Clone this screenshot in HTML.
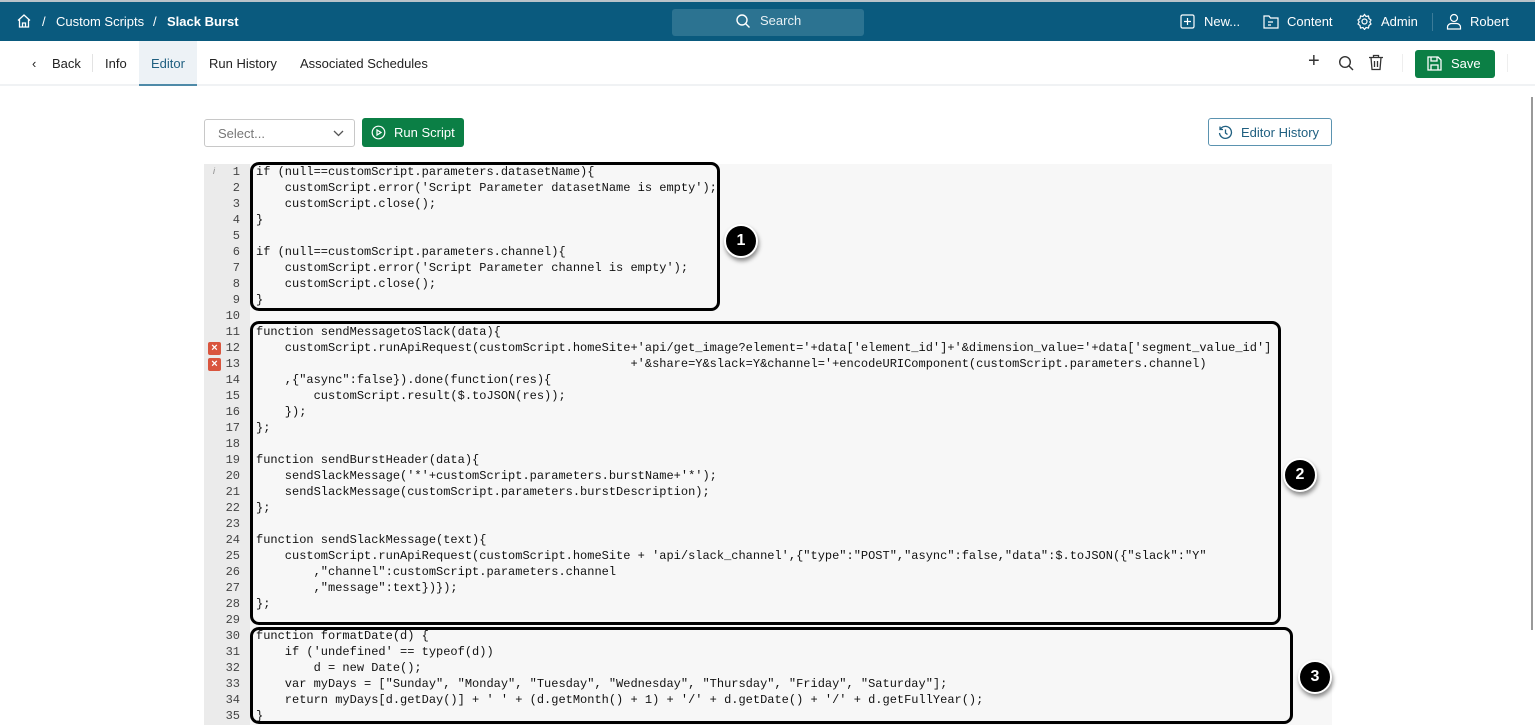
<!DOCTYPE html>
<html><head><meta charset="utf-8"><style>
*{box-sizing:border-box;margin:0;padding:0}
body{width:1535px;height:725px;overflow:hidden;background:#fff;font-family:"Liberation Sans",sans-serif;position:relative}
.top{position:absolute;left:0;top:0;width:1535px;height:41px;background:#0a5a7e;border-top:2px solid #b9c3c9;color:#fff;font-size:13px}
.top span{position:absolute;top:12px}
.search{position:absolute;left:672px;top:7px;width:192px;height:27px;background:#2c7391;border-radius:3px;color:#e8f0f4;font-size:13px}
.nav{position:absolute;left:0;top:41px;width:1535px;height:45px;border-bottom:2px solid #f0f2f4;font-size:13px;color:#222}
.nav span{position:absolute;top:15px}
.gut{position:absolute;left:204px;top:164px;width:46px;height:561px;background:#ebebeb}
.code{position:absolute;left:250px;top:164px;width:1082px;height:561px;background:#f7f7f7}
pre{position:absolute;left:256px;top:164px;font-family:"Liberation Mono",monospace;font-size:12px;line-height:16px;color:#111}
.ln{position:absolute;left:204px;top:164px;width:36px;text-align:right;font-family:"Liberation Mono",monospace;font-size:12px;line-height:16px;color:#444}
.box{position:absolute;border:3px solid #000;border-radius:9px}
.c{position:absolute;width:34px;height:34px;border-radius:50%;background:#000;border:2px solid #fff;box-shadow:1px 3px 4px rgba(0,0,0,.45);color:#fff;font-weight:bold;font-size:16px;text-align:center;line-height:30px}
.x{position:absolute;left:208px;width:13px;height:13px;background:#d9553e;border-radius:2px;color:#fff;font-size:11px;line-height:13px;text-align:center;font-weight:bold}
</style></head><body>
<div class="top">
<svg style="position:absolute;left:16px;top:11px" width="16" height="16" viewBox="0 0 16 16" fill="none" stroke="#fff" stroke-width="1.3"><path d="M2 7.5L8 2l6 5.5M3.5 6.5V14h9V6.5M6.5 14v-4h3v4"/></svg>
<span style="left:42px">/</span><span style="left:56px">Custom Scripts</span><span style="left:153px">/</span><span style="left:167px;font-weight:bold">Slack Burst</span>
<div class="search"><svg style="position:absolute;left:63px;top:4px" width="16" height="16" viewBox="0 0 16 16" fill="none" stroke="#fff" stroke-width="1.4"><circle cx="7" cy="7" r="5"/><path d="M10.5 10.5l4 4"/></svg><span style="position:absolute;left:88px;top:4px">Search</span></div>
<svg style="position:absolute;left:1180px;top:12px" width="15" height="15" viewBox="0 0 15 15" fill="none" stroke="#fff" stroke-width="1.2"><rect x="1" y="1" width="13" height="13" rx="1.5"/><path d="M7.5 4v7M4 7.5h7"/></svg><span style="left:1204px">New...</span>
<svg style="position:absolute;left:1263px;top:12px" width="16" height="15" viewBox="0 0 16 15" fill="none" stroke="#fff" stroke-width="1.2"><path d="M1 2h5l1.5 2H15v10H1z"/><path d="M5 8h5M5 11h3"/></svg><span style="left:1287px">Content</span>
<svg style="position:absolute;left:1356px;top:11px" width="17" height="17" viewBox="0 0 17 17" fill="none" stroke="#fff" stroke-width="1.2"><circle cx="8.5" cy="8.5" r="2.5"/><path d="M8.5 1.5l1.5 2 2.5-.5.5 2.5 2 1.5-1.2 2 1.2 2-2 1.5-.5 2.5-2.5-.5-1.5 2-1.5-2-2.5.5-.5-2.5-2-1.5 1.2-2-1.2-2 2-1.5.5-2.5 2.5.5z"/></svg><span style="left:1381px">Admin</span>
<div style="position:absolute;left:1432px;top:11px;width:1px;height:18px;background:#3b7b98"></div>
<svg style="position:absolute;left:1446px;top:11px" width="16" height="17" viewBox="0 0 16 17" fill="none" stroke="#fff" stroke-width="1.2"><circle cx="8" cy="5" r="3.5"/><path d="M1.5 16v-2c0-2 2-3.5 4-3.5h5c2 0 4 1.5 4 3.5v2z"/></svg><span style="left:1470px">Robert</span>
</div>
<div class="nav">
<span style="left:32px">&lsaquo;</span><span style="left:52px">Back</span>
<div style="position:absolute;left:92px;top:13px;width:1px;height:18px;background:#e3e3e3"></div>
<span style="left:105px">Info</span>
<div style="position:absolute;left:139px;top:0;width:58px;height:45px;background:#edf2f6;border-bottom:2px solid #4e8aa8"></div>
<span style="left:151px;color:#1f5f80">Editor</span><span style="left:209px">Run History</span><span style="left:300px">Associated Schedules</span>
<span style="left:1308px;font-size:20px;top:9px;color:#333">+</span>
<svg style="position:absolute;left:1338px;top:14px" width="16" height="16" viewBox="0 0 16 16" fill="none" stroke="#333" stroke-width="1.4"><circle cx="7" cy="7" r="5.3"/><path d="M11 11l4 4"/></svg>
<svg style="position:absolute;left:1368px;top:13px" width="16" height="17" viewBox="0 0 16 17" fill="none" stroke="#333" stroke-width="1.3"><path d="M1 3.5h14M5.5 3.5V1.5h5v2M3 3.5l1 12h8l1-12M6.5 7v6M9.5 7v6"/></svg>
<div style="position:absolute;left:1402px;top:13px;width:1px;height:18px;background:#eee"></div>
<div style="position:absolute;left:1415px;top:9px;width:80px;height:28px;background:#0b7f45;border-radius:3px;color:#fff">
<svg style="position:absolute;left:12px;top:6px" width="15" height="15" viewBox="0 0 15 15" fill="none" stroke="#fff" stroke-width="1.3"><path d="M1 1h10l3 3v10H1z"/><path d="M4 1v4h6V1M4 14V9h7v5"/></svg><span style="position:absolute;left:36px;top:6px">Save</span></div>
<div style="position:absolute;left:1507px;top:13px;width:1px;height:18px;background:#eee"></div>
</div>
<div style="position:absolute;left:204px;top:119px;width:151px;height:28px;border:1px solid #c8c8c8;border-radius:3px;font-size:13px;color:#777"><span style="position:absolute;left:13px;top:6px">Select...</span><svg style="position:absolute;left:128px;top:10px" width="11" height="7" viewBox="0 0 11 7" fill="none" stroke="#555" stroke-width="1.3"><path d="M1 1l4.5 4.5L10 1"/></svg></div>
<div style="position:absolute;left:362px;top:118px;width:102px;height:29px;background:#0b7f45;border-radius:3px;color:#fff;font-size:13px"><svg style="position:absolute;left:9px;top:7px" width="15" height="15" viewBox="0 0 15 15" fill="none" stroke="#fff" stroke-width="1.2"><circle cx="7.5" cy="7.5" r="6.3"/><path d="M6 5v5l4-2.5z"/></svg><span style="position:absolute;left:32px;top:7px">Run Script</span></div>
<div style="position:absolute;left:1208px;top:118px;width:124px;height:28px;border:1px solid #5b93b0;border-radius:3px;color:#1f5f80;font-size:13px"><svg style="position:absolute;left:9px;top:6px" width="15" height="15" viewBox="0 0 15 15" fill="none" stroke="#1f5f80" stroke-width="1.3"><path d="M2.5 4A6 6 0 1 1 1.5 8M2 1.5V4.5h3M7.5 4.5v3.5l2 1.5"/></svg><span style="position:absolute;left:32px;top:6px">Editor History</span></div>
<div style="position:absolute;left:1531px;top:97px;width:2px;height:533px;background:#999"></div>
<div class="gut"></div><div class="code"></div>
<div style="position:absolute;left:213px;top:166px;font-size:9px;color:#888;font-style:italic">i</div>
<div class="x" style="top:342px">×</div><div class="x" style="top:358px">×</div>
<div class="ln">1<br>2<br>3<br>4<br>5<br>6<br>7<br>8<br>9<br>10<br>11<br>12<br>13<br>14<br>15<br>16<br>17<br>18<br>19<br>20<br>21<br>22<br>23<br>24<br>25<br>26<br>27<br>28<br>29<br>30<br>31<br>32<br>33<br>34<br>35</div>
<pre>if (null==customScript.parameters.datasetName){
    customScript.error('Script Parameter datasetName is empty');
    customScript.close();
}

if (null==customScript.parameters.channel){
    customScript.error('Script Parameter channel is empty');
    customScript.close();
}

function sendMessagetoSlack(data){
    customScript.runApiRequest(customScript.homeSite+'api/get_image?element='+data['element_id']+'&amp;dimension_value='+data['segment_value_id']
                                                    +'&amp;share=Y&amp;slack=Y&amp;channel='+encodeURIComponent(customScript.parameters.channel)
    ,{"async":false}).done(function(res){
        customScript.result($.toJSON(res));
    });
};

function sendBurstHeader(data){
    sendSlackMessage('*'+customScript.parameters.burstName+'*');
    sendSlackMessage(customScript.parameters.burstDescription);
};

function sendSlackMessage(text){
    customScript.runApiRequest(customScript.homeSite + 'api/slack_channel',{"type":"POST","async":false,"data":$.toJSON({"slack":"Y"
        ,"channel":customScript.parameters.channel
        ,"message":text})});
};

function formatDate(d) {
    if ('undefined' == typeof(d))
        d = new Date();
    var myDays = ["Sunday", "Monday", "Tuesday", "Wednesday", "Thursday", "Friday", "Saturday"];
    return myDays[d.getDay()] + ' ' + (d.getMonth() + 1) + '/' + d.getDate() + '/' + d.getFullYear();
}</pre>
<div class="box" style="left:250px;top:162px;width:470px;height:149px"></div>
<div class="box" style="left:250px;top:321px;width:1031px;height:304px"></div>
<div class="box" style="left:250px;top:627px;width:1043px;height:97px"></div>
<div class="c" style="left:724px;top:224px">1</div>
<div class="c" style="left:1283px;top:458px">2</div>
<div class="c" style="left:1298px;top:660px">3</div>
</body></html>
